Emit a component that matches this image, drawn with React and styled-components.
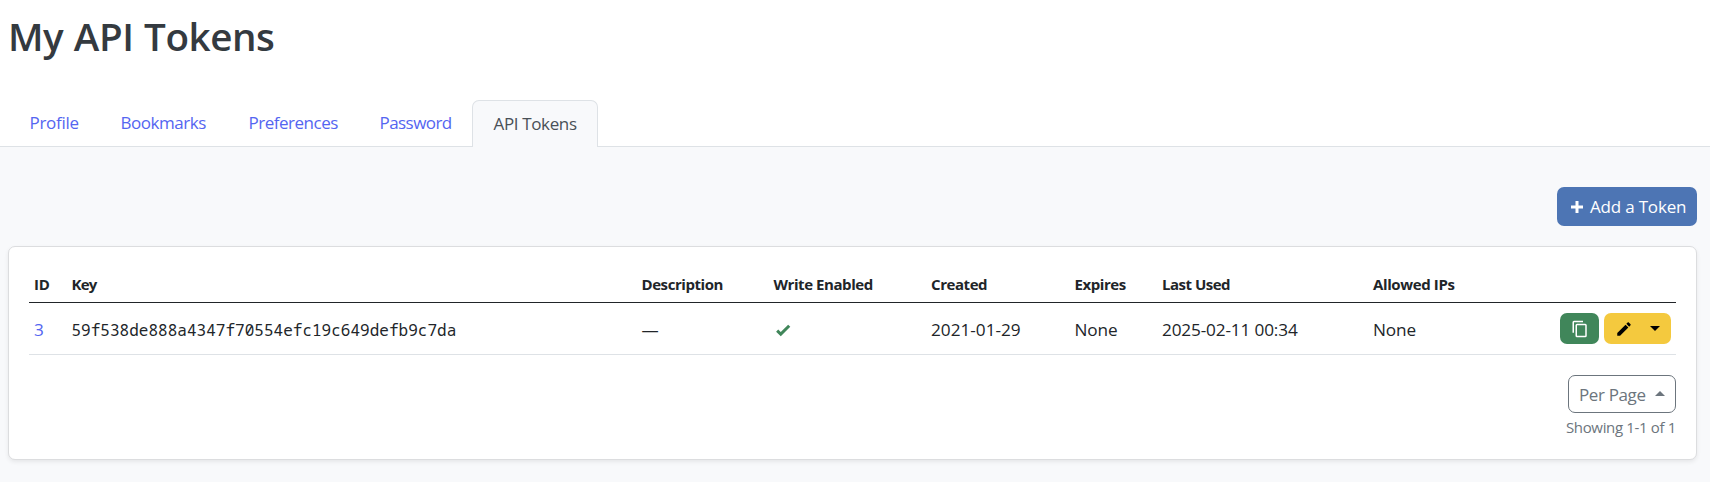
import React from "react";
import styled, { createGlobalStyle } from "styled-components";

const GlobalStyle = createGlobalStyle`
  *, *::before, *::after { box-sizing: border-box; }
  body {
    margin: 0;
    min-height: 100vh;
    background: #f8f9fb;
    color: #212529;
    font-family: "Open Sans", "Noto Sans", sans-serif;
    font-size: 17.2px;
    overflow: hidden;
  }
`;

const Page = styled.div`
  display: flex;
  flex-direction: column;
  min-height: 482px;
`;

const Header = styled.header`
  height: 147px;
  background: #fff;
  border-bottom: 1px solid #dee2e6;
  display: flex;
  flex-direction: column;
  justify-content: space-between;
`;

const Title = styled.h1`
  margin: 0;
  padding: 9px 0 0 8px;
  font-size: 38.6px;
  font-weight: 600;
  line-height: 54px;
  letter-spacing: -0.45px;
  word-spacing: 1px;
  color: #343a40;
`;

const Tabs = styled.nav`
  display: flex;
  padding-left: 8px;
  height: 47px;
  margin-bottom: -1px;
`;

const Tab = styled.a`
  width: ${(p) => p.$width}px;
  padding: ${(p) => (p.$active ? "10px" : "9px")} 0 0 20.5px;
  border: 1px solid ${(p) => (p.$active ? "#dee2e6" : "transparent")};
  border-bottom: 0;
  border-radius: 7px 7px 0 0;
  background: ${(p) => (p.$active ? "#f8f9fb" : "transparent")};
  color: ${(p) => (p.$active ? "#495057" : "#5465f1")};
  font-size: 17px;
  line-height: 26px;
  letter-spacing: ${(p) => p.$track}px;
  white-space: nowrap;
`;

const Content = styled.main`
  display: flex;
  flex-direction: column;
  padding: 40px 13px 0 8px;
`;

const AddButton = styled.button`
  align-self: flex-end;
  display: flex;
  align-items: center;
  gap: 4px;
  width: 140px;
  height: 39px;
  padding: 0 0 0 11px;
  border: 0;
  border-radius: 7px;
  background: #4d75b4;
  color: #fff;
  font: 17px "Open Sans", sans-serif;
  letter-spacing: -0.19px;
  white-space: nowrap;
`;

const Card = styled.section`
  margin-top: 20px;
  height: 214px;
  padding: 20px 20px 0;
  background: #fff;
  border: 1px solid #dcdddf;
  border-radius: 7px;
  box-shadow: 0 2px 4px rgba(0, 0, 0, 0.075);
`;

const Table = styled.table`
  width: 100%;
  table-layout: fixed;
  border-collapse: separate;
  border-spacing: 0;
`;

const Th = styled.th`
  height: 36px;
  padding: 0 0 2px 5px;
  border-bottom: 1px solid #212529;
  text-align: left;
  vertical-align: middle;
  font-size: 15px;
  line-height: 24px;
  font-weight: 700;
  letter-spacing: ${(p) => p.$track}px;
  white-space: nowrap;
`;

const Td = styled.td`
  height: 52px;
  padding: 2px 0 0 5px;
  border-bottom: 1px solid #dee2e6;
  vertical-align: middle;
  line-height: 27px;
  letter-spacing: ${(p) => p.$track || 0}px;
  white-space: nowrap;
`;

const IdLink = styled.a`
  color: #5465f1;
`;

const Key = styled.span`
  font-family: "Noto Sans Mono", "DejaVu Sans Mono", monospace;
  font-size: 16px;
  letter-spacing: 0.02px;
`;

const Actions = styled.div`
  display: flex;
  justify-content: flex-end;
  gap: 5px;
  padding: 0 5px 2px 0;
`;

const CopyButton = styled.button`
  display: flex;
  align-items: center;
  justify-content: center;
  width: 39px;
  height: 31px;
  padding: 0;
  border: 0;
  border-radius: 7px;
  background: #40865a;
  color: #fff;
`;

const EditGroup = styled.div`
  display: flex;
  align-items: center;
  width: 67px;
  height: 31px;
  padding-left: 11px;
  gap: 17px;
  border-radius: 7px;
  background: #f4c93e;
  color: #000;
`;

const Caret = styled.span`
  width: 0;
  height: 0;
  border: 5px solid transparent;
  ${(p) =>
    p.$up
      ? "border-top: 0; border-bottom-color: currentColor; margin-top: -2px;"
      : "border-bottom: 0; border-top-color: currentColor;"}
`;

const Footer = styled.footer`
  display: flex;
  flex-direction: column;
  align-items: flex-end;
  padding-top: 20px;
  color: #6c757d;
`;

const PerPage = styled.button`
  display: flex;
  align-items: center;
  justify-content: space-between;
  width: 108px;
  height: 38px;
  padding: 0 10.5px 0 10px;
  border: 1px solid #6c757d;
  border-radius: 7px;
  background: #fff;
  color: #6c757d;
  font: 17px "Open Sans", sans-serif;
  letter-spacing: -0.37px;
  white-space: nowrap;
`;

const Showing = styled.small`
  margin-top: 2px;
  font-size: 15px;
  line-height: 24px;
  letter-spacing: -0.34px;
`;

const Svg = styled.svg`
  display: block;
  flex: none;
  fill: ${(p) => p.$color || "currentColor"};
`;

const icons = {
  plus: "M20 14H14V20H10V14H4V10H10V4H14V10H20V14Z",
  check: "M9,20.42L2.79,14.21L5.62,11.38L9,14.77L18.88,4.88L21.71,7.71L9,20.42Z",
  copy: "M19,21H8V7H19M19,5H8A2,2 0 0,0 6,7V21A2,2 0 0,0 8,23H19A2,2 0 0,0 21,21V7A2,2 0 0,0 19,5M16,1H4A2,2 0 0,0 2,3V17H4V3H16V1Z",
  pencil:
    "M20.71,7.04C21.1,6.65 21.1,6 20.71,5.63L18.37,3.29C18,2.9 17.35,2.9 16.96,3.29L15.12,5.12L18.87,8.87M3,17.25V21H6.75L17.81,9.93L14.06,6.18L3,17.25Z",
};

const Icon = ({ name, color, size = 18 }) => (
  <Svg viewBox="0 0 24 24" width={size} height={size} $color={color} aria-hidden="true">
    <path d={icons[name]} />
  </Svg>
);

const tabs = [
  { label: "Profile", width: 91, track: -0.28 },
  { label: "Bookmarks", width: 128, track: -0.46 },
  { label: "Preferences", width: 131, track: -0.48 },
  { label: "Password", width: 114, track: -0.56 },
  { label: "API Tokens", width: 126, track: -0.36, active: true },
];

const columns = [
  { label: "ID", width: 37.5, track: -0.3 },
  { label: "Key", width: 570, track: -0.8 },
  { label: "Description", width: 132, track: -0.43 },
  { label: "Write Enabled", width: 157.5, track: -0.43 },
  { label: "Created", width: 143.5, track: -0.43 },
  { label: "Expires", width: 87.5, track: -0.43 },
  { label: "Last Used", width: 211, track: -0.5 },
  { label: "Allowed IPs", width: 150, track: -0.38 },
  { label: "", track: 0 },
];

const ColumnSizes = () => (
  <colgroup>
    {columns.map((c, i) => (
      <col key={i} width={c.width} />
    ))}
  </colgroup>
);

export default function App() {
  return (
    <Page>
      <GlobalStyle />
      <Header>
        <Title>My API Tokens</Title>
        <Tabs>
          {tabs.map((t) => (
            <Tab key={t.label} $width={t.width} $track={t.track} $active={t.active}>
              {t.label}
            </Tab>
          ))}
        </Tabs>
      </Header>
      <Content>
        <AddButton>
          <Icon name="plus" />
          Add a Token
        </AddButton>
        <Card>
          <Table>
            <ColumnSizes />
            <thead>
              <tr>
                {columns.map((c, i) => (
                  <Th key={i} $track={c.track}>
                    {c.label}
                  </Th>
                ))}
              </tr>
            </thead>
            <tbody>
              <tr>
                <Td>
                  <IdLink>3</IdLink>
                </Td>
                <Td>
                  <Key>59f538de888a4347f70554efc19c649defb9c7da</Key>
                </Td>
                <Td>—</Td>
                <Td>
                  <Icon name="check" color="#40865a" />
                </Td>
                <Td>2021-01-29</Td>
                <Td $track={-0.1}>None</Td>
                <Td $track={-0.15}>2025-02-11 00:34</Td>
                <Td $track={-0.1}>None</Td>
                <Td>
                  <Actions>
                    <CopyButton aria-label="Copy">
                      <Icon name="copy" />
                    </CopyButton>
                    <EditGroup>
                      <Icon name="pencil" />
                      <Caret />
                    </EditGroup>
                  </Actions>
                </Td>
              </tr>
            </tbody>
          </Table>
          <Footer>
            <PerPage>
              Per Page
              <Caret $up />
            </PerPage>
            <Showing>Showing 1-1 of 1</Showing>
          </Footer>
        </Card>
      </Content>
    </Page>
  );
}
